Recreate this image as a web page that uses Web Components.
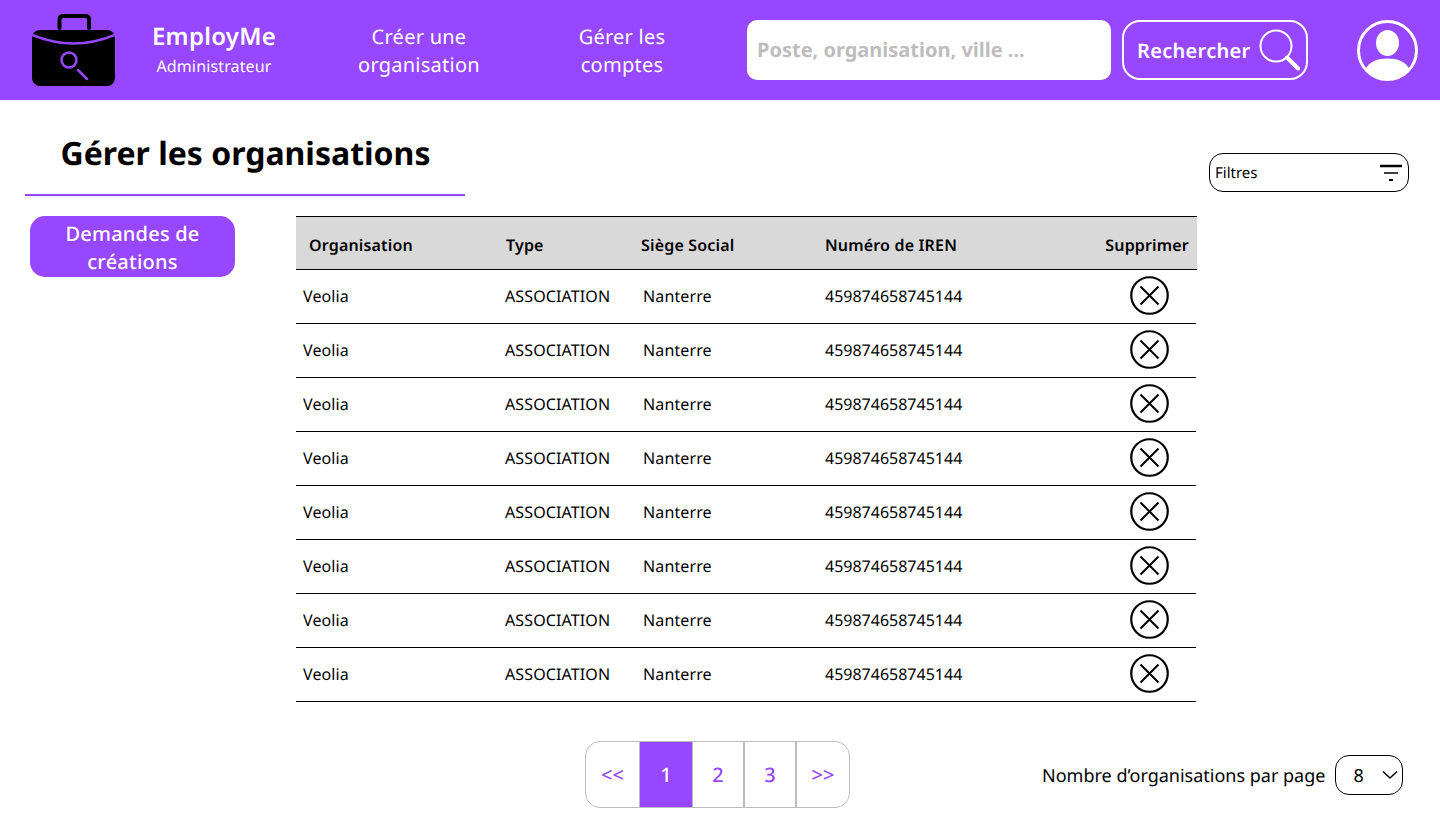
<!DOCTYPE html>
<html lang="fr">
<head>
<meta charset="utf-8">
<title>EmployMe</title>
<style>
    html, body { margin: 0; padding: 0; background: #fff; }
    body { font-family: "Noto Sans", sans-serif; color: #000; text-rendering: geometricPrecision; }
</style>
</head>
<body>
<app-page>
    <app-header slot="header"></app-header>
    <page-title slot="title">Gérer les organisations</page-title>
    <filter-box slot="filter">Filtres</filter-box>
    <side-button slot="side">Demandes de créations</side-button>
    <org-table slot="table" id="table"></org-table>
    <page-nav slot="pager"></page-nav>
    <per-page slot="perpage" value="8">Nombre d’organisations par page</per-page>
</app-page>

<script>
class AppPage extends HTMLElement {
    constructor() {
        super();
        this.attachShadow({ mode: 'open' });
    }
    connectedCallback() {
        this.shadowRoot.innerHTML = `
            <style>
                :host { display: block; width: 1440px; height: 836px; overflow: hidden; }
                .top { display: flex; justify-content: space-between; padding: 0 31px 0 25px; height: 96px; align-items: flex-end; }
                .content { display: flex; margin-top: 20px; }
                .side { width: 296px; padding-left: 30px; box-sizing: border-box; }
                .bottom { display: flex; margin-top: 39px; padding-left: 585px; height: 67px; align-items: center; }
                .bottom .right { margin-left: 192px; }
            </style>
            <slot name="header"></slot>
            <div class="top">
                <slot name="title"></slot>
                <slot name="filter"></slot>
            </div>
            <div class="content">
                <div class="side"><slot name="side"></slot></div>
                <slot name="table"></slot>
            </div>
            <div class="bottom">
                <slot name="pager"></slot>
                <div class="right"><slot name="perpage"></slot></div>
            </div>
        `;
    }
}

class AppHeader extends HTMLElement {
    constructor() {
        super();
        this.attachShadow({ mode: 'open' });
    }
    connectedCallback() {
        this.shadowRoot.innerHTML = `
            <style>
                :host { display: flex; align-items: center; height: 100px; background: #9747ff; color: #fff; box-sizing: border-box; padding-left: 32px; }
                svg { display: block; flex: none; }
                .brand { width: 198px; text-align: center; flex: none; padding-bottom: 4px; }
                .brand b { display: block; font-size: 24px; font-weight: 600; line-height: 34px; margin-top: 2px; letter-spacing: .25px; }
                .brand span { display: block; font-size: 16px; line-height: 24px; letter-spacing: .14px; }
                .nav { flex: none; text-align: center; font-size: 20px; line-height: 28px; padding-top: 2px; letter-spacing: .25px; }
                .nav.one { width: 202px; margin-left: 5px; }
                .nav.two { width: 204px; margin-right: 23px; }
                .search { width: 364px; height: 60px; flex: none; box-sizing: border-box; background: #fff; border-radius: 10px; color: #bdbdbd; font-size: 20px; font-weight: 700; line-height: 60px; padding-left: 10px; }
                .go { margin-left: 11px; width: 186px; height: 60px; flex: none; box-sizing: border-box; border: 2px solid #fff; border-radius: 18px; display: flex; align-items: center; padding-left: 13px; font-size: 20px; font-weight: 600; line-height: 28px; letter-spacing: .3px; }
                .go span { padding-top: 2px; }
                .go svg { margin-left: 8px; }
                .avatar { margin-left: 49px; }
            </style>
            <svg width="83" height="72" viewBox="0 0 83 72">
                <path d="M27.500 14V5.500Q27.500 2 31 2H53.500Q57 2 57 5.500V14" fill="none" stroke="#000" stroke-width="4" stroke-linecap="round"/>
                <rect x="0" y="16" width="83" height="56" rx="8" fill="#000"/>
                <path d="M0 21Q41.500 38 83 21" fill="none" stroke="#9747ff" stroke-width="2.500"/>
                <circle cx="37" cy="46" r="7.500" fill="none" stroke="#9747ff" stroke-width="2.500"/>
                <path d="M46 56L55 65" fill="none" stroke="#9747ff" stroke-width="2.500" stroke-linecap="round"/>
            </svg>
            <div class="brand"><b>EmployMe</b><span>Administrateur</span></div>
            <div class="nav one">Créer une<br>organisation</div>
            <div class="nav two">Gérer les<br>comptes</div>
            <div class="search">Poste, organisation, ville ...</div>
            <div class="go"><span>Rechercher</span>
                <svg width="42" height="42" viewBox="0 0 42 42">
                    <circle cx="17" cy="17" r="15.500" fill="none" stroke="#fff" stroke-width="2"/>
                    <path d="M28 28.500L39 39.500" fill="none" stroke="#fff" stroke-width="4" stroke-linecap="round"/>
                </svg>
            </div>
            <svg class="avatar" width="61" height="61" viewBox="0 0 61 61">
                <circle cx="30.500" cy="30.500" r="29" fill="none" stroke="#fff" stroke-width="3"/>
                <ellipse cx="30.500" cy="23" rx="11.500" ry="13" fill="#fff"/>
                <path d="M8 50.500C12 41 21 38.500 30.500 38.500S49 41 53 50.500C47 56.500 39 60 30.500 60S14 56.500 8 50.500Z" fill="#fff"/>
            </svg>
        `;
    }
}

class PageTitle extends HTMLElement {
    constructor() {
        super();
        this.attachShadow({ mode: 'open' });
    }
    connectedCallback() {
        this.shadowRoot.innerHTML = `
            <style>
                :host { display: block; width: 440px; height: 96px; }
                .text { height: 96px; box-sizing: border-box; border-bottom: 2px solid #9747ff; padding: 32px 0 0 35.500px; font-size: 32px; font-weight: 700; line-height: 44px; }
                .glow { height: 3px; background: linear-gradient(rgba(151,71,255,.14), rgba(151,71,255,0)); }
            </style>
            <div class="text"><slot></slot></div>
            <div class="glow"></div>
        `;
    }
}

class FilterBox extends HTMLElement {
    constructor() {
        super();
        this.attachShadow({ mode: 'open' });
    }
    connectedCallback() {
        this.shadowRoot.innerHTML = `
            <style>
                :host { display: flex; align-items: center; justify-content: space-between; width: 200px; height: 39px; box-sizing: border-box; border: 1px solid #000; border-radius: 14px; padding: 0 6px 0 5px; font-size: 15px; margin-bottom: 4px; }
                svg { display: block; }
            </style>
            <slot></slot>
            <svg width="22" height="18" viewBox="0 0 22 18">
                <path d="M0 2H22" stroke="#000" stroke-width="2.500" fill="none"/>
                <path d="M4 9H18" stroke="#000" stroke-width="1.500" fill="none"/>
                <path d="M9 16H13" stroke="#000" stroke-width="2" fill="none"/>
            </svg>
        `;
    }
}

class SideButton extends HTMLElement {
    constructor() {
        super();
        this.attachShadow({ mode: 'open' });
    }
    connectedCallback() {
        this.shadowRoot.innerHTML = `
            <style>
                :host { display: block; width: 205px; height: 61px; box-sizing: border-box; padding: 4px 30px 0; background: #9747ff; color: #fff; border-radius: 15px; text-align: center; font-size: 20px; font-weight: 500; line-height: 28px; letter-spacing: .22px; }
            </style>
            <slot></slot>
        `;
    }
}

class OrgTable extends HTMLElement {
    constructor() {
        super();
        this.attachShadow({ mode: 'open' });
    }
    connectedCallback() {
        const rows = Array.from({ length: 8 }, () => `
            <div class="row">
                <span>Veolia</span><span>ASSOCIATION</span><span>Nanterre</span><span class="num">459874658745144</span>
                <svg width="39" height="39" viewBox="0 0 39 39">
                    <circle cx="19.500" cy="19.500" r="18.250" fill="none" stroke="#000" stroke-width="2.200"/>
                    <path d="M10.500 10.500L28.500 28.500M28.500 10.500L10.500 28.500" stroke="#000" stroke-width="2" fill="none"/>
                </svg>
            </div>`).join('');
        this.shadowRoot.innerHTML = `
            <style>
                :host { display: block; width: 901px; font-size: 16px; }
                .head { display: grid; grid-template-columns: 197px 135px 184px 1fr auto; align-items: center; height: 54px; box-sizing: border-box; padding: 0 8px 0 13px; background: #d9d9d9; border-top: 1px solid #000; border-bottom: 1px solid #000; font-weight: 600; letter-spacing: .17px; }
                .head span { margin-top: 4px; }
                .row { display: grid; grid-template-columns: 202px 138px 182px 305px 39px; align-items: center; width: 900px; height: 54px; box-sizing: border-box; padding-left: 7px; border-bottom: 1px solid #000; letter-spacing: .12px; }
                .row span { margin-top: -2px; }
                .row .num { letter-spacing: 0; }
                svg { display: block; margin-top: -2px; }
            </style>
            <div class="head"><span>Organisation</span><span>Type</span><span>Siège Social</span><span>Numéro de IREN</span><span>Supprimer</span></div>
            ${rows}
        `;
    }
}

class PageNav extends HTMLElement {
    constructor() {
        super();
        this.attachShadow({ mode: 'open' });
    }
    connectedCallback() {
        this.shadowRoot.innerHTML = `
            <style>
                :host { display: flex; width: 265px; height: 67px; box-sizing: border-box; border: 1px solid #bdbdbd; border-radius: 15px; overflow: hidden; color: #9747ff; font-size: 20px; font-weight: 500; }
                a { display: flex; align-items: center; justify-content: center; flex: none; border-left: 2px solid #bdbdbd; }
                a.first { width: 53px; border-left: 0; }
                a.on { background: #9747ff; color: #fff; border-left-width: 1px; width: 52px; }
                a.two { border-left-width: 1px; width: 50px; }
                a.three { width: 50px; }
                a.last { width: 52px; }
            </style>
            <a class="first">&lt;&lt;</a><a class="on">1</a><a class="two">2</a><a class="three">3</a><a class="last">&gt;&gt;</a>
        `;
    }
}

class PerPage extends HTMLElement {
    constructor() {
        super();
        this.attachShadow({ mode: 'open' });
    }
    connectedCallback() {
        this.shadowRoot.innerHTML = `
            <style>
                :host { display: flex; align-items: center; font-size: 18px; }
                .label { padding-top: 3px; }
                .box { margin-left: 10px; width: 68px; height: 40px; box-sizing: border-box; border: 1px solid #000; border-radius: 14px; display: flex; align-items: center; justify-content: space-between; padding: 3px 4px 0 17px; }
                svg { display: block; margin-top: -3px; }
            </style>
            <span class="label"><slot></slot></span>
            <div class="box">${this.getAttribute('value')}
                <svg width="16" height="10" viewBox="0 0 16 10"><path d="M1 1.500L8 8L15 1.500" fill="none" stroke="#000" stroke-width="1.500"/></svg>
            </div>
        `;
    }
}

customElements.define('app-page', AppPage);
customElements.define('app-header', AppHeader);
customElements.define('page-title', PageTitle);
customElements.define('filter-box', FilterBox);
customElements.define('side-button', SideButton);
customElements.define('org-table', OrgTable);
customElements.define('page-nav', PageNav);
customElements.define('per-page', PerPage);
</script>
</body>
</html>
